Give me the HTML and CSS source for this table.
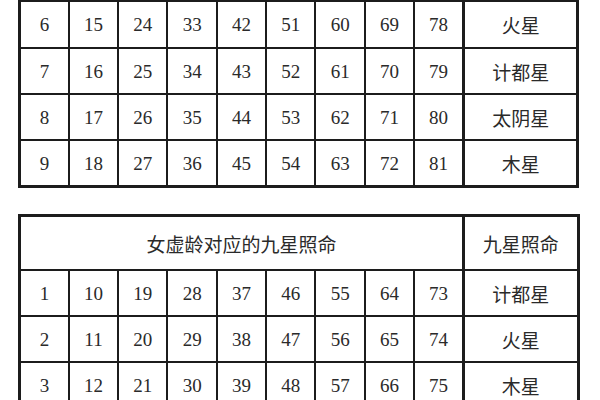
FILE: index.html
```html
<!DOCTYPE html>
<html lang="zh">
<head>
<meta charset="utf-8">
<link rel="stylesheet" href="styles.css">
</head>
<body>
<div class="page">
  <table class="grid top">
    <colgroup>
      <col class="c"><col class="c"><col class="c"><col class="c"><col class="c"><col class="c"><col class="c"><col class="c"><col class="c"><col class="s">
    </colgroup>
    <tr><td>6</td><td>15</td><td>24</td><td>33</td><td>42</td><td>51</td><td>60</td><td>69</td><td>78</td><td class="star">火星</td></tr>
    <tr><td>7</td><td>16</td><td>25</td><td>34</td><td>43</td><td>52</td><td>61</td><td>70</td><td>79</td><td class="star">计都星</td></tr>
    <tr><td>8</td><td>17</td><td>26</td><td>35</td><td>44</td><td>53</td><td>62</td><td>71</td><td>80</td><td class="star">太阴星</td></tr>
    <tr><td>9</td><td>18</td><td>27</td><td>36</td><td>45</td><td>54</td><td>63</td><td>72</td><td>81</td><td class="star">木星</td></tr>
  </table>
  <table class="grid bottom">
    <colgroup>
      <col class="c"><col class="c"><col class="c"><col class="c"><col class="c"><col class="c"><col class="c"><col class="c"><col class="c"><col class="s">
    </colgroup>
    <tr class="head"><td colspan="9" class="cjk">女虚龄对应的九星照命</td><td class="star">九星照命</td></tr>
    <tr><td>1</td><td>10</td><td>19</td><td>28</td><td>37</td><td>46</td><td>55</td><td>64</td><td>73</td><td class="star">计都星</td></tr>
    <tr><td>2</td><td>11</td><td>20</td><td>29</td><td>38</td><td>47</td><td>56</td><td>65</td><td>74</td><td class="star">火星</td></tr>
    <tr><td>3</td><td>12</td><td>21</td><td>30</td><td>39</td><td>48</td><td>57</td><td>66</td><td>75</td><td class="star">木星</td></tr>
  </table>
</div>
</body>
</html>
```
FILE: styles.css
```css
html, body {
  margin: 0;
  padding: 0;
  background: #ffffff;
}
.page {
  padding-left: 18px;
  width: 600px;
  height: 400px;
  overflow: hidden;
  box-sizing: border-box;
}
.grid {
  border-collapse: collapse;
  table-layout: fixed;
  width: 561px;
  border: 3px solid #1c1c1c;
  font-family: "Liberation Serif", "Times New Roman", serif;
  font-size: 19px;
  color: #2a2a2a;
}
.grid.top {
  border-top: 2px solid #1c1c1c;
  margin-bottom: 26px;
}
.c { width: 49.33px; }
.s { width: 114.5px; }
.grid td {
  border: 2px solid #1c1c1c;
  padding: 0;
  height: 44px;
  text-align: center;
  vertical-align: middle;
  line-height: 1;
}
.grid.top tr:first-child td {
  height: 45px;
}
.grid td.star {
  border-left: 3px solid #1c1c1c;
  border-right: 3px solid #1c1c1c;
  font-family: "Noto Sans CJK SC", sans-serif;
  font-size: 19px;
}
.grid .cjk {
  font-family: "Noto Sans CJK SC", sans-serif;
  font-size: 19px;
  border-right: 3px solid #1c1c1c;
}
.grid tr.head td {
  height: 52px;
  border-top: 3px solid #1c1c1c;
}
```
